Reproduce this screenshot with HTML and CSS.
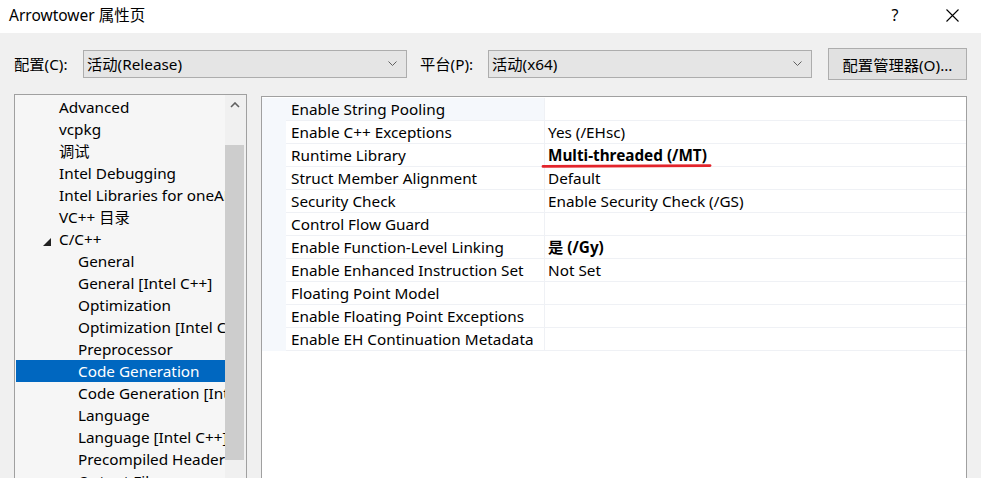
FILE: index.html
```html
<!DOCTYPE html>
<html lang="zh-CN">
<head>
<meta charset="utf-8">
<title>Arrowtower 属性页</title>
<link rel="stylesheet" href="styles.css">
</head>
<body>
<div class="window">
  <header class="titlebar">
    <span class="title">Arrowtower 属性页</span>
    <span class="tb-btn tb-help">?</span>
    <span class="tb-btn tb-close">
      <svg width="13" height="13" viewBox="0 0 13 13"><path d="M0.5 0.5 L12.5 12.5 M12.5 0.5 L0.5 12.5" stroke="#000" stroke-width="1.1" fill="none"/></svg>
    </span>
  </header>

  <div class="toolbar">
    <span class="lbl lbl-config">配置(C):</span>
    <div class="combo">
      <span class="combo-text">活动(Release)</span>
      <svg class="chev" width="9" height="5" viewBox="0 0 9 5"><path d="M0.5 0.5 L4.5 4.5 L8.5 0.5" stroke="#606060" stroke-width="1" fill="none"/></svg>
    </div>
    <span class="lbl lbl-platform">平台(P):</span>
    <div class="combo">
      <span class="combo-text">活动(x64)</span>
      <svg class="chev" width="9" height="5" viewBox="0 0 9 5"><path d="M0.5 0.5 L4.5 4.5 L8.5 0.5" stroke="#606060" stroke-width="1" fill="none"/></svg>
    </div>
    <button class="btn">配置管理器(O)...</button>
  </div>

  <div class="main">
    <div class="tree">
      <ul class="tree-list">
        <li class="l1">Advanced</li>
        <li class="l1">vcpkg</li>
        <li class="l1">调试</li>
        <li class="l1">Intel Debugging</li>
        <li class="l1">Intel Libraries for oneAPI</li>
        <li class="l1">VC++ 目录</li>
        <li class="l1 open"><span class="twisty"></span>C/C++</li>
        <li class="l2">General</li>
        <li class="l2">General [Intel C++]</li>
        <li class="l2">Optimization</li>
        <li class="l2">Optimization [Intel C++]</li>
        <li class="l2">Preprocessor</li>
        <li class="l2 selected">Code Generation</li>
        <li class="l2">Code Generation [Intel C++]</li>
        <li class="l2">Language</li>
        <li class="l2">Language [Intel C++]</li>
        <li class="l2">Precompiled Headers</li>
        <li class="l2">Output Files</li>
      </ul>
      <div class="vscroll">
        <div class="sb-arrow">
          <svg width="10" height="6" viewBox="0 0 10 6"><path d="M1 5 L5 1 L9 5" stroke="#606060" stroke-width="1.6" fill="none"/></svg>
        </div>
        <div class="sb-gap"></div>
        <div class="sb-thumb"></div>
      </div>
    </div>

    <div class="grid">
      <div class="row active"><div class="gut"></div><div class="name">Enable String Pooling</div><div class="val"></div></div>
      <div class="row"><div class="gut"></div><div class="name">Enable C++ Exceptions</div><div class="val">Yes (/EHsc)</div></div>
      <div class="row"><div class="gut"></div><div class="name">Runtime Library</div><div class="val bold marked">Multi-threaded (/MT)<svg class="mark" width="172" height="6" viewBox="0 0 172 6"><path d="M2 3.4 Q 86 3.2 169 2.6" stroke="#e3242b" stroke-width="2.8" stroke-linecap="round" fill="none"/></svg></div></div>
      <div class="row"><div class="gut"></div><div class="name">Struct Member Alignment</div><div class="val">Default</div></div>
      <div class="row"><div class="gut"></div><div class="name">Security Check</div><div class="val">Enable Security Check (/GS)</div></div>
      <div class="row"><div class="gut"></div><div class="name">Control Flow Guard</div><div class="val"></div></div>
      <div class="row"><div class="gut"></div><div class="name">Enable Function-Level Linking</div><div class="val bold">是 (/Gy)</div></div>
      <div class="row"><div class="gut"></div><div class="name">Enable Enhanced Instruction Set</div><div class="val">Not Set</div></div>
      <div class="row"><div class="gut"></div><div class="name">Floating Point Model</div><div class="val"></div></div>
      <div class="row"><div class="gut"></div><div class="name">Enable Floating Point Exceptions</div><div class="val"></div></div>
      <div class="row"><div class="gut"></div><div class="name">Enable EH Continuation Metadata</div><div class="val"></div></div>
    </div>
  </div>
</div>
</body>
</html>
```

FILE: styles.css
```css
* { box-sizing: border-box; }

html, body {
  margin: 0;
  padding: 0;
}

body {
  width: 981px;
  height: 478px;
  overflow: hidden;
  background: #f0f0f0;
  font-family: "Noto Sans", "Noto Sans CJK SC", sans-serif;
  font-size: 15.3px;
  color: #000;
}

.window {
  width: 981px;
  height: 478px;
  overflow: hidden;
}

/* ---------- title bar ---------- */
.titlebar {
  height: 33px;
  background: #fff;
  display: flex;
  align-items: center;
  padding: 0 6px 3px 9px;
}

.title {
  font-size: 15.5px;
  line-height: 20px;
}

.tb-btn {
  width: 46px;
  height: 24px;
  display: flex;
  align-items: center;
  justify-content: center;
}

.tb-help {
  margin-left: auto;
  margin-right: 11px;
  font-size: 16px;
  line-height: 20px;
}

.tb-close svg { display: block; }

/* ---------- toolbar ---------- */
.toolbar {
  height: 61px;
  display: flex;
  align-items: center;
  padding-left: 14px;
}

.lbl {
  line-height: 20px;
  white-space: nowrap;
}

.lbl-config { width: 69px; }

.lbl-platform {
  width: 68px;
  margin-left: 13px;
}

.combo {
  width: 324px;
  height: 28px;
  background: #e5e5e5;
  border: 1px solid #adadad;
  display: flex;
  align-items: center;
  padding: 0 9px 0 3px;
}

.combo-text {
  flex: 1;
  line-height: 20px;
  white-space: nowrap;
}

.chev { display: block; }

.btn {
  width: 139px;
  height: 32px;
  margin-left: 16px;
  background: #e1e1e1;
  border: 1px solid #adadad;
  font: inherit;
  color: #000;
  padding: 0;
}

/* ---------- main ---------- */
.main {
  display: flex;
  align-items: flex-start;
  padding-left: 14px;
  gap: 14px;
}

.tree {
  width: 233px;
  height: 420px;
  border: 1px solid #a0a0a0;
  background: #f6f6f6;
  display: flex;
}

.tree-list {
  list-style: none;
  margin: 0;
  padding: 1px 0 0 1px;
  width: 210px;
  overflow: hidden;
}

.tree-list li {
  height: 22px;
  line-height: 22px;
  white-space: nowrap;
  overflow: hidden;
}

.tree-list .l1 { padding-left: 43px; }
.tree-list .l1.open { padding-left: 27px; }
.tree-list .l2 { padding-left: 62px; }

.tree-list .selected {
  background: #0067c0;
  color: #fff;
}

.twisty {
  display: inline-block;
  width: 8px;
  height: 8px;
  margin-right: 8px;
  background: #222;
  clip-path: polygon(100% 0, 100% 100%, 0 100%);
  vertical-align: -1px;
}

.vscroll {
  width: 21px;
  display: flex;
  flex-direction: column;
  background: #f0f0f0;
  padding-right: 2px;
}

.sb-arrow {
  height: 17px;
  display: flex;
  align-items: center;
  justify-content: center;
  padding-top: 3px;
}

.sb-arrow svg { display: block; }

.sb-gap { height: 33px; }

.sb-thumb {
  height: 315px;
  background: #cdcdcd;
}

.grid {
  width: 706px;
  height: 420px;
  margin-top: 2px;
  border: 1px solid #a0a0a0;
  background: #fff;
  padding-top: 1px;
}

.row {
  display: flex;
  height: 23px;
}

.gut {
  width: 24px;
  background: #f5f8fc;
}

.name {
  width: 259px;
  padding-left: 5px;
  line-height: 22px;
  border-bottom: 1px solid #eff1f5;
  border-right: 1px solid #eff1f5;
  white-space: nowrap;
}

.val {
  flex: 1;
  padding-left: 3px;
  line-height: 22px;
  border-bottom: 1px solid #eff1f5;
  white-space: nowrap;
}

.row.active .name { background: #f5f8fc; }

.bold { font-weight: bold; }

.marked { position: relative; }

.mark {
  position: absolute;
  left: -4px;
  top: 19px;
  display: block;
}
```
